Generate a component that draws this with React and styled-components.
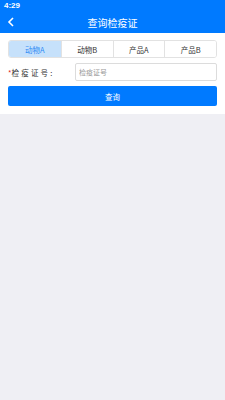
import React, { useState } from 'react';
import styled, { createGlobalStyle } from 'styled-components';

const GlobalStyle = createGlobalStyle`
  html, body {
    margin: 0;
    padding: 0;
    background: #efeff4;
    font-family: "Noto Sans CJK SC", "Liberation Sans", sans-serif;
  }
`;

const Page = styled.div`
  width: 225px;
  min-height: 400px;
  background: #efeff4;
`;

const Header = styled.div`
  background: #007aff;
  color: #fff;
`;

const StatusBar = styled.div`
  height: 12px;
  padding-left: 4px;
  font-family: "Liberation Sans", sans-serif;
  font-size: 8px;
  font-weight: bold;
  line-height: 12px;
`;

const NavBar = styled.div`
  height: 21px;
  display: flex;
  align-items: center;
  justify-content: center;
  position: relative;
  font-size: 10px;
`;

const Back = styled.div`
  position: absolute;
  left: 7px;
  top: 5px;
  display: flex;
`;

const Panel = styled.div`
  background: #fff;
  padding: 7px 8px 8px;
  display: flex;
  flex-direction: column;
`;

const Tabs = styled.div`
  display: grid;
  grid-template-columns: repeat(4, 1fr);
  border: 1px solid #e2e2e2;
  border-radius: 3px;
  overflow: hidden;
  height: 16px;
`;

const Tab = styled.div`
  display: flex;
  align-items: center;
  justify-content: center;
  font-size: 7.5px;
  color: ${p => (p.$active ? '#2f8cf5' : '#333')};
  background: ${p => (p.$active ? '#c6e1fb' : '#fff')};
  border-left: ${p => (p.$first ? 'none' : '1px solid #e2e2e2')};
  cursor: pointer;
`;

const Row = styled.div`
  display: flex;
  align-items: center;
  margin-top: 5px;
  height: 18px;
`;

const Label = styled.div`
  width: 67px;
  font-size: 7.5px;
  color: #333;
  letter-spacing: 2.2px;
  white-space: nowrap;
`;

const Star = styled.span`
  color: #e02020;
  letter-spacing: 0;
`;

const Input = styled.input`
  flex: 1;
  height: 18px;
  box-sizing: border-box;
  border: 1px solid #dcdcdc;
  border-radius: 2px;
  padding: 0 3px;
  font-size: 7px;
  font-family: inherit;
  outline: none;
  &::placeholder {
    color: #999;
  }
`;

const Button = styled.button`
  margin-top: 5px;
  height: 20px;
  border: none;
  border-radius: 2px;
  background: #007aff;
  color: #fff;
  font-size: 7.5px;
  font-family: inherit;
  cursor: pointer;
`;

const tabs = ['动物A', '动物B', '产品A', '产品B'];

const App = () => {
  const [active, setActive] = useState(0);

  return (
    <Page>
      <GlobalStyle />
      <Header>
        <StatusBar>4:29</StatusBar>
        <NavBar>
          <Back>
            <svg width="8" height="10" viewBox="0 0 8 10">
              <path d="M6 1 L2 5 L6 9" stroke="#fff" strokeWidth="1.6" fill="none" />
            </svg>
          </Back>
          查询检疫证
        </NavBar>
      </Header>
      <Panel>
        <Tabs>
          {tabs.map((t, i) => (
            <Tab key={t} $active={i === active} $first={i === 0} onClick={() => setActive(i)}>
              {t}
            </Tab>
          ))}
        </Tabs>
        <Row>
          <Label><Star>*</Star>检疫证号:</Label>
          <Input placeholder="检疫证号" />
        </Row>
        <Button>查询</Button>
      </Panel>
    </Page>
  );
};

export default App;
